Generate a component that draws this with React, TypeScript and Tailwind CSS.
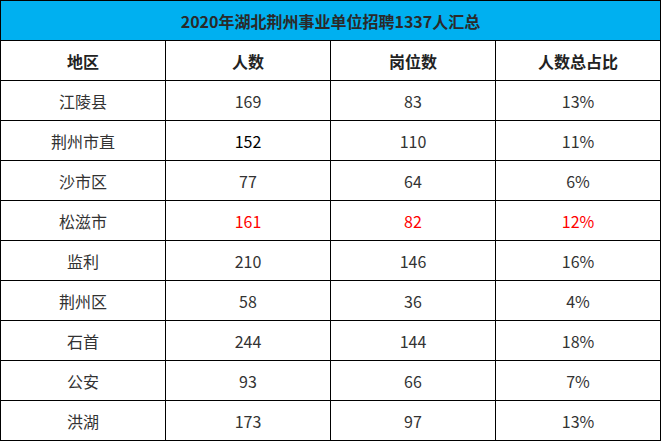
const rows: { area: string; people: string; posts: string; ratio: string; red?: boolean; dark?: boolean }[] = [
  { area: "江陵县", people: "169", posts: "83", ratio: "13%" },
  { area: "荆州市直", people: "152", posts: "110", ratio: "11%", dark: true },
  { area: "沙市区", people: "77", posts: "64", ratio: "6%" },
  { area: "松滋市", people: "161", posts: "82", ratio: "12%", red: true },
  { area: "监利", people: "210", posts: "146", ratio: "16%" },
  { area: "荆州区", people: "58", posts: "36", ratio: "4%" },
  { area: "石首", people: "244", posts: "144", ratio: "18%" },
  { area: "公安", people: "93", posts: "66", ratio: "7%" },
  { area: "洪湖", people: "173", posts: "97", ratio: "13%" },
];

const cell = "border border-black h-[40px] w-[165px] p-0 text-center align-middle";

export default function App() {
  return (
    <div className="w-[661px] h-[441px] bg-white font-['Noto_Sans_CJK_SC','Noto_Sans',sans-serif] text-[16px] text-[#333]">
      <table className="border-collapse w-[661px] table-fixed">
        <tbody>
          <tr className="h-[40px]">
            <td colSpan={4} className="border border-black h-[40px] p-0 text-center align-middle bg-[#00b0f0] font-bold text-[#2a2a2a]">
              2020年湖北荆州事业单位招聘1337人汇总
            </td>
          </tr>
          <tr className="h-[40px] font-bold text-[#222]">
            <td className={cell}>地区</td>
            <td className={cell}>人数</td>
            <td className={cell}>岗位数</td>
            <td className={cell}>人数总占比</td>
          </tr>
          {rows.map((r) => (
            <tr key={r.area} className="h-[40px]">
              <td className={cell}>{r.area}</td>
              <td className={`${cell} ${r.red ? "text-[#ff0000]" : r.dark ? "text-black" : ""}`}>{r.people}</td>
              <td className={`${cell} ${r.red ? "text-[#ff0000]" : ""}`}>{r.posts}</td>
              <td className={`${cell} ${r.red ? "text-[#ff0000]" : ""}`}>{r.ratio}</td>
            </tr>
          ))}
        </tbody>
      </table>
    </div>
  );
}
